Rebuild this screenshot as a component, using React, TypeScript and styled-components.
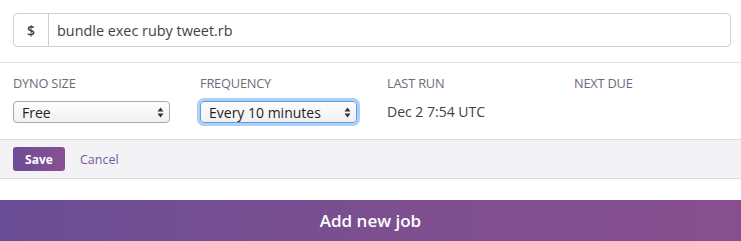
import React from "react";
import styled, { createGlobalStyle } from "styled-components";

const GlobalStyle = createGlobalStyle`
  html, body {
    margin: 0;
    padding: 0;
    background: #fff;
    font-family: "Open Sans", "Liberation Sans", sans-serif;
    color: #3f3f44;
  }
`;

const Root = styled.div`
  width: 741px;
  height: 241px;
  overflow: hidden;
  display: flex;
  flex-direction: column;
`;

const CommandSection = styled.div`
  padding: 13px 10px 15px 13px;
  border-bottom: 1px solid #e3e3e6;
`;

const InputGroup = styled.div`
  display: flex;
  height: 34px;
  box-sizing: border-box;
  border: 1px solid #cfcfd6;
  border-radius: 4px;
  background: #fff;
`;

const Addon = styled.div`
  width: 34px;
  display: flex;
  align-items: center;
  justify-content: center;
  border-right: 1px solid #cfcfd6;
  font-size: 14px;
  font-weight: 600;
  color: #3f3f44;
`;

const CommandText = styled.div`
  flex: 1;
  display: flex;
  align-items: center;
  padding-left: 8px;
  font-size: 14.4px;
  color: #3f3f44;
`;

const Fields = styled.div`
  display: grid;
  grid-template-columns: repeat(4, 187px);
  padding: 12px 13px 16px;
`;

const Field = styled.div`
  display: flex;
  flex-direction: column;
  gap: 10px;
`;

const Label = styled.div`
  font-size: 12.8px;
  line-height: 16px;
  text-transform: uppercase;
  color: #6c6c78;
  letter-spacing: -0.2px;
`;

const Value = styled.div`
  font-size: 14px;
  line-height: 22px;
  color: #3f3f44;
`;

const SelectBox = styled.div<{ focused?: boolean }>`
  position: relative;
  width: 157px;
  height: 22px;
  box-sizing: border-box;
  border: 1px solid ${(p) => (p.focused ? "#5b9ee8" : "#a9a9b0")};
  border-radius: 4px;
  background: linear-gradient(to bottom, #fdfdfd, #f1f1f3);
  box-shadow: ${(p) => (p.focused ? "0 0 0 3px rgba(112, 168, 240, 0.55)" : "none")};
  display: flex;
  align-items: center;
  padding-left: 8px;
  font-size: 14px;
  color: #1f1f22;
`;

const Arrows = styled.svg`
  position: absolute;
  right: 5px;
  top: 5px;
`;

const Footer = styled.div`
  display: flex;
  align-items: center;
  gap: 15px;
  height: 38px;
  padding: 0 13px;
  background: #f3f3f5;
  border-top: 1px solid #dcdce0;
  border-bottom: 1px solid #dcdce0;
`;

const SaveButton = styled.button`
  width: 52px;
  height: 24px;
  border: none;
  border-radius: 3px;
  background: linear-gradient(to right, #6d4d98, #885091);
  color: #fff;
  font-family: inherit;
  font-size: 12px;
  font-weight: 700;
  padding: 0;
`;

const CancelLink = styled.span`
  font-size: 12.5px;
  color: #79589f;
`;

const Spacer = styled.div`
  height: 21px;
`;

const AddButton = styled.div`
  height: 41px;
  display: flex;
  align-items: center;
  justify-content: center;
  background: linear-gradient(to right, #6a4e95, #7d4f8f 55%, #874f8e);
  color: #fff;
  font-size: 17px;
  font-weight: 600;
`;

const SelectArrows = () => (
  <Arrows width="7" height="11" viewBox="0 0 7 11">
    <path d="M3.5 0.5 L6.5 4.5 L0.5 4.5 Z" fill="#333" />
    <path d="M3.5 10.5 L6.5 6.5 L0.5 6.5 Z" fill="#333" />
  </Arrows>
);

const App = () => {
  return (
    <Root>
      <GlobalStyle />
      <CommandSection>
        <InputGroup>
          <Addon>$</Addon>
          <CommandText>bundle exec ruby tweet.rb</CommandText>
        </InputGroup>
      </CommandSection>
      <Fields>
        <Field>
          <Label>Dyno Size</Label>
          <SelectBox>
            Free
            <SelectArrows />
          </SelectBox>
        </Field>
        <Field>
          <Label>Frequency</Label>
          <SelectBox focused>
            Every 10 minutes
            <SelectArrows />
          </SelectBox>
        </Field>
        <Field>
          <Label>Last Run</Label>
          <Value>Dec 2 7:54 UTC</Value>
        </Field>
        <Field>
          <Label>Next Due</Label>
        </Field>
      </Fields>
      <Footer>
        <SaveButton>Save</SaveButton>
        <CancelLink>Cancel</CancelLink>
      </Footer>
      <Spacer />
      <AddButton>Add new job</AddButton>
    </Root>
  );
};

export default App;
